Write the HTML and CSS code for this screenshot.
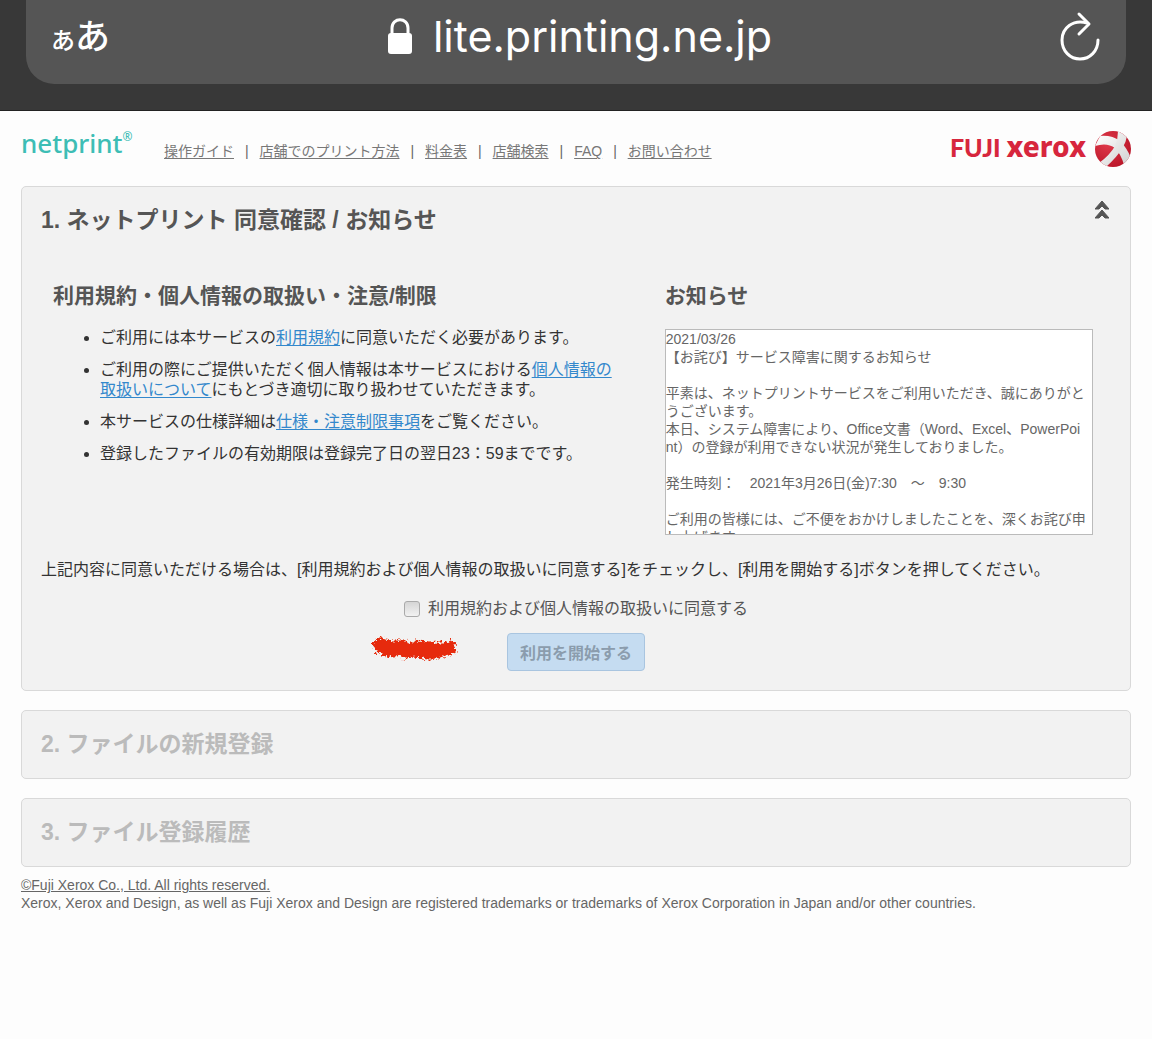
FILE: index.html
```
<!DOCTYPE html>
<html lang="ja">
<head>
    <meta charset="UTF-8">
    <meta name="viewport" content="width=device-width, initial-scale=1.0">
    <title>ネットプリント</title>
    <link rel="stylesheet" href="styles.css">
</head>
<body>

<!-- アドレスバー -->
<div class="browser-bar">
    <div class="address">
        <button type="button" class="text-size" aria-label="表示設定"><span class="small">あ</span><span>あ</span></button>
        <div class="url">
            <svg width="26" height="36" viewBox="0 0 26 36" aria-hidden="true">
                <path d="M5 17V10C5 -1 21 -1 21 10V17" fill="none" stroke="#fff" stroke-width="3"/>
                <rect x="1" y="15" width="24" height="21" rx="3" fill="#fff"/>
            </svg>
            <span>lite.printing.ne.jp</span>
        </div>
        <button type="button" class="reload" aria-label="再読み込み">
            <svg width="42" height="50" viewBox="0 0 42 50" fill="none" stroke="#fff" stroke-width="3" stroke-linecap="round" stroke-linejoin="round">
                <path d="M28 12C14 8 3 17 3 29C3 40 11 48 21 48C31 48 39 40 39 29"/>
                <path d="M20 3L30 13L20 23"/>
            </svg>
        </button>
    </div>
</div>

<div class="page">
    <header>
        <a href="#" class="logo">netprint<sup>®</sup></a>
        <nav>
            <a href="#">操作ガイド</a><span>|</span>
            <a href="#">店舗でのプリント方法</a><span>|</span>
            <a href="#">料金表</a><span>|</span>
            <a href="#">店舗検索</a><span>|</span>
            <a href="#">FAQ</a><span>|</span>
            <a href="#">お問い合わせ</a>
        </nav>
        <div class="brand">
            <span class="brand-name">FUJI <span>xerox</span></span>
            <svg width="36" height="36" viewBox="0 0 36 36" aria-hidden="true">
                <defs>
                    <radialGradient id="ball" cx="35%" cy="35%" r="75%">
                        <stop offset="0" stop-color="#e03a4b"/>
                        <stop offset="1" stop-color="#b81427"/>
                    </radialGradient>
                    <linearGradient id="band" x1="0" y1="0" x2="1" y2="1">
                        <stop offset="0" stop-color="#fff"/>
                        <stop offset="1" stop-color="#d0d0d0"/>
                    </linearGradient>
                    <clipPath id="round"><circle cx="18" cy="18" r="18"/></clipPath>
                </defs>
                <g clip-path="url(#round)">
                    <rect width="36" height="36" fill="url(#ball)"/>
                    <path d="M0 15L5 5Q17 4 25 10Q32 17 36 27L29 34Q26 23 20 17Q12 11 0 15Z" fill="url(#band)"/>
                    <path d="M23 0L32 5Q31 11 28 16Q23 25 11 36L4 32Q15 24 20 15Q23 8 23 0Z" fill="url(#band)"/>
                </g>
            </svg>
        </div>
    </header>

    <main>
        <section class="panel">
            <div class="panel-head">
                <h2>1. ネットプリント 同意確認 / お知らせ</h2>
                <button type="button" class="collapse" aria-label="閉じる">
                    <svg width="14" height="18" viewBox="0 0 14 18" fill="#555">
                        <path d="M7 0L14 8H10L7 5L4 8H0ZM7 9L14 17H10L7 14L4 17H0Z" stroke="#555"/>
                    </svg>
                </button>
            </div>

            <div class="columns">
                <div class="terms">
                    <h3>利用規約・個人情報の取扱い・注意/制限</h3>
                    <ul>
                        <li>ご利用には本サービスの<a href="#">利用規約</a>に同意いただく必要があります。</li>
                        <li>ご利用の際にご提供いただく個人情報は本サービスにおける<a href="#">個人情報の<br>取扱いについて</a>にもとづき適切に取り扱わせていただきます。</li>
                        <li>本サービスの仕様詳細は<a href="#">仕様・注意制限事項</a>をご覧ください。</li>
                        <li>登録したファイルの有効期限は登録完了日の翌日23：59までです。</li>
                    </ul>
                </div>
                <div class="news">
                    <h3>お知らせ</h3>
                    <div class="news-box">2021/03/26
【お詫び】サービス障害に関するお知らせ

平素は、ネットプリントサービスをご利用いただき、誠にありがとうございます。
本日、システム障害により、Office文書（Word、Excel、PowerPoint）の登録が利用できない状況が発生しておりました。

発生時刻：　2021年3月26日(金)7:30　～　9:30

ご利用の皆様には、ご不便をおかけしましたことを、深くお詫び申し上げます。</div>
                </div>
            </div>

            <p class="guide">上記内容に同意いただける場合は、[利用規約および個人情報の取扱いに同意する]をチェックし、[利用を開始する]ボタンを押してください。</p>

            <form class="agree">
                <div class="agree-check">
                    <input type="checkbox" id="agree">
                    <label for="agree">利用規約および個人情報の取扱いに同意する</label>
                </div>
                <div class="agree-start">
                    <!-- 赤い手書きの線 -->
                    <svg class="scribble" width="88" height="26" viewBox="0 0 88 26" fill="none" stroke="#e62a0c" stroke-linecap="round" stroke-linejoin="round" aria-hidden="true">
                        <filter id="rough" x="-5%" y="-20%" width="110%" height="140%">
                            <feTurbulence type="fractalNoise" baseFrequency="0.4" numOctaves="2" seed="4"/>
                            <feDisplacementMap in="SourceGraphic" scale="9" xChannelSelector="R" yChannelSelector="G"/>
                        </filter>
                        <g filter="url(#rough)">
                            <path stroke-width="13" d="M10 10L20 12L32 14L44 14L56 15L68 14L79 14"/>
                            <path stroke-width="5" d="M4 8L12 5M8 15L16 19L24 20M34 21L46 20L60 22L72 20L84 16L81 8M22 8L36 8M46 8L60 9"/>
                        </g>
                    </svg>
                    <button type="submit" disabled>利用を開始する</button>
                </div>
            </form>
        </section>

        <section class="panel closed">
            <h2>2. ファイルの新規登録</h2>
        </section>

        <section class="panel closed">
            <h2>3. ファイル登録履歴</h2>
        </section>
    </main>

    <footer>
        <a href="#">©Fuji Xerox Co., Ltd. All rights reserved.</a>
        <p>Xerox, Xerox and Design, as well as Fuji Xerox and Design are registered trademarks or trademarks of Xerox Corporation in Japan and/or other countries.</p>
    </footer>
</div>

</body>
</html>
```
FILE: styles.css
```
* {
    box-sizing: border-box;
}

body {
    font-family: "Liberation Sans", "Noto Sans CJK JP", sans-serif;
    background-color: #fdfdfd;
    color: #333;
    font-size: 16px;
    line-height: 20px;
    margin: 0;
}

h2, h3, p, ul {
    margin: 0;
}

button {
    font-family: inherit;
    cursor: pointer;
}

/* アドレスバー */
.browser-bar {
    background-color: #383838;
    padding: 0 26px 26px;
    border-bottom: 1px solid #222;
}

.address {
    display: flex;
    justify-content: space-between;
    align-items: center;
    height: 84px;
    padding: 0 25px 12px;
    background-color: #555;
    border-radius: 0 0 28px 28px;
    color: #fff;
}

.address button {
    display: flex;
    align-items: baseline;
    padding: 0;
    background: none;
    border: none;
    color: #fff;
}

.address .text-size {
    padding-top: 6px;
    font-size: 35px;
    line-height: 40px;
    font-weight: 500;
}

.text-size .small {
    font-size: 24px;
}

.url {
    display: flex;
    align-items: center;
    gap: 20px;
    margin-right: 10px;
    font-family: Inter, sans-serif;
    font-size: 43px;
    line-height: 52px;
}

/* ヘッダー */
.page {
    padding: 16px 21px;
}

header {
    display: flex;
    align-items: flex-start;
    height: 43px;
    margin-bottom: 16px;
}

.logo {
    width: 143px;
    font-family: "Noto Sans", sans-serif;
    font-size: 26px;
    font-weight: 500;
    line-height: 32px;
    color: #3dbdb5;
    text-decoration: none;
}

.logo sup {
    font-size: 12px;
    line-height: 20px;
    vertical-align: top;
}

nav {
    flex: 1;
    padding-top: 14px;
    color: #666;
    font-size: 14px;
}

nav a {
    color: #777;
    text-underline-offset: 2px;
}

nav span {
    margin: 0 7px 0 11px;
}

.brand {
    display: flex;
    align-items: center;
    gap: 9px;
    padding-top: 3px;
}

.brand-name {
    font-family: Lato, sans-serif;
    font-weight: 900;
    font-size: 25px;
    line-height: 32px;
    padding-bottom: 4px;
    color: #d7263d;
}

.brand-name span {
    font-family: "Noto Sans", sans-serif;
    font-weight: 800;
    font-size: 28px;
}

/* パネル */
.panel {
    background-color: #f2f2f2;
    border: 1px solid #d9d9d9;
    border-radius: 5px;
    padding: 18px 19px 19px;
    margin-bottom: 19px;
}

.panel h2 {
    color: #555;
    font-size: 23px;
    line-height: 30px;
}

.panel-head {
    display: flex;
    justify-content: space-between;
    align-items: flex-start;
}

.collapse {
    display: flex;
    padding: 0;
    margin: -4px 2px 0 0;
    background: none;
    border: none;
}

.columns {
    display: grid;
    grid-template-columns: 10fr 7fr;
    padding: 46px 18px 0 12px;
}

.columns h3 {
    color: #555;
    font-size: 21px;
    line-height: 30px;
}

.terms ul {
    padding-left: 47px;
    margin-top: 17px;
}

.terms li {
    margin-bottom: 12px;
}

.terms a {
    color: #3388cc;
    text-underline-offset: 2px;
}

.news-box {
    height: 206px;
    margin-top: 18px;
    padding-right: 6px;
    background-color: #fff;
    border: 1px solid #bbb;
    color: #666;
    font-size: 14px;
    line-height: 18px;
    white-space: pre-wrap;
    word-break: break-all;
    overflow: hidden;
}

.guide {
    margin-top: 25px;
}

.agree {
    color: #555;
}

.agree-check {
    display: flex;
    justify-content: center;
    align-items: center;
    gap: 8px;
    margin-top: 19px;
}

.agree-check input {
    appearance: none;
    width: 16px;
    height: 16px;
    margin: 0;
    border: 1px solid #aaa;
    border-radius: 3px;
    background: linear-gradient(#d5d5d5, #f2f2f2);
}

.agree-start {
    display: flex;
    justify-content: center;
    position: relative;
    margin-top: 14px;
}

.agree-start button {
    width: 138px;
    height: 38px;
    padding: 0;
    background-color: #c5dcf1;
    border: 1px solid #a9c5e0;
    border-radius: 4px;
    color: #8b9cad;
    font-size: 16px;
    font-weight: bold;
}

/* ボタンの左に重ねる */
.scribble {
    position: absolute;
    top: 2px;
    right: calc(50% + 118px);
}

.closed h2 {
    color: #bbb;
}

footer {
    margin-top: -10px;
    color: #666;
    font-size: 14px;
    line-height: 18px;
}

footer a {
    color: #666;
}
```
